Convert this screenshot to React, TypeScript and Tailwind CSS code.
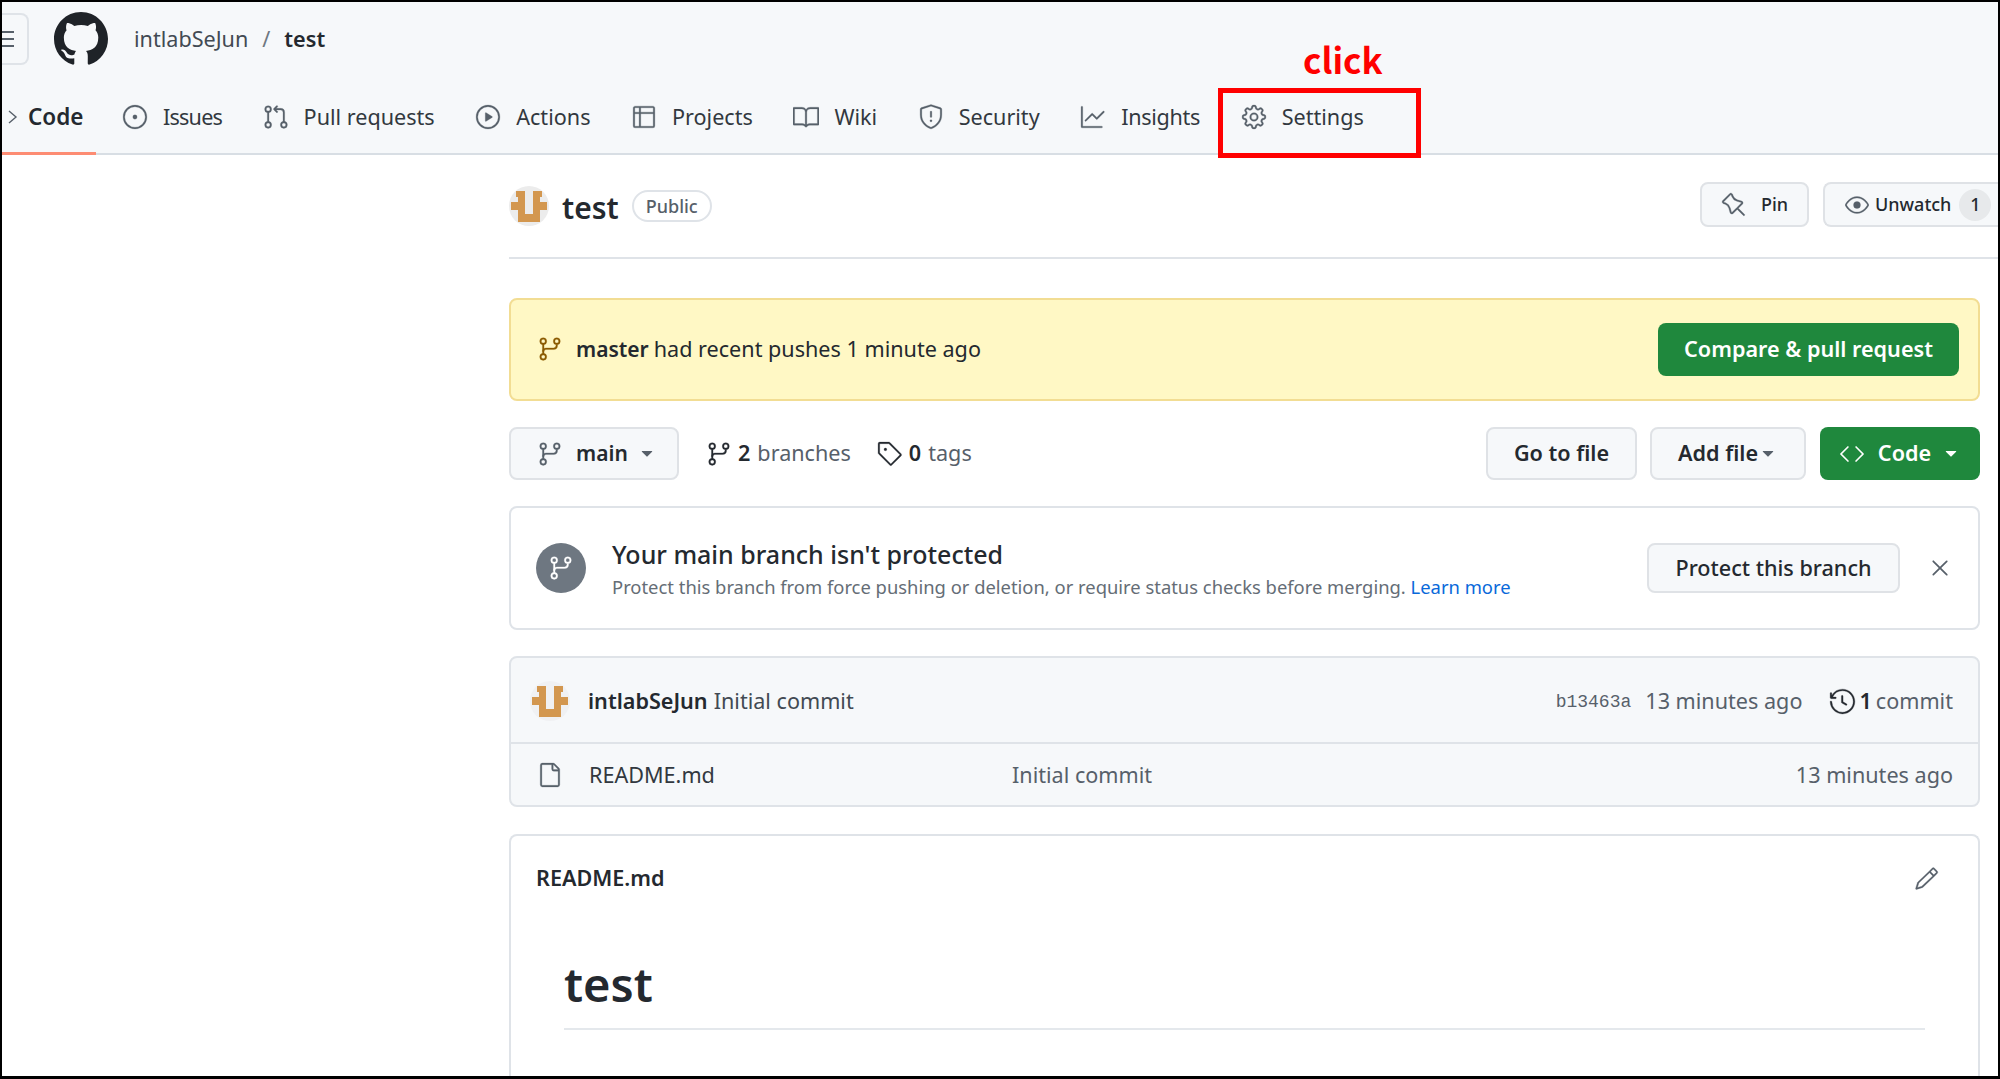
import React from 'react';
import {
    GoBook,
    GoCode,
    GoEye,
    GoFile,
    GoGear,
    GoGitBranch,
    GoGitPullRequest,
    GoGraph,
    GoHistory,
    GoIssueOpened,
    GoPencil,
    GoPin,
    GoPlay,
    GoShield,
    GoTable,
    GoTag,
    GoTriangleDown,
    GoX,
} from 'react-icons/go';

const Avatar: React.FC<{ className: string; bg?: string }> = ({ className, bg = '#ececec' }) => (
    <svg viewBox="0 0 40 40" className={className}>
        <circle cx="20" cy="20" r="20" fill={bg} />
        <path fill="#d3974f" d="M7 5h9v23h8V5h9v6h-2v5h7v8h-7v12H9V24H2v-8h7v-5H7z" />
    </svg>
);

const GithubMark: React.FC = () => (
    <svg viewBox="0 0 16 16" className="ml-[25px] w-[54px] h-[54px]" fill="#1f2328">
        <path d="M8 0C3.58 0 0 3.58 0 8c0 3.54 2.29 6.53 5.47 7.59.4.07.55-.17.55-.38 0-.19-.01-.82-.01-1.49-2.01.37-2.53-.49-2.69-.94-.09-.23-.48-.94-.82-1.13-.28-.15-.68-.52-.01-.53.63-.01 1.08.58 1.23.82.72 1.21 1.87.87 2.33.66.07-.52.28-.87.51-1.07-1.78-.2-3.64-.89-3.64-3.95 0-.87.31-1.59.82-2.15-.08-.2-.36-1.02.08-2.12 0 0 .67-.21 2.2.82.64-.18 1.32-.27 2-.27.68 0 1.36.09 2 .27 1.53-1.04 2.2-.82 2.2-.82.44 1.1.16 1.92.08 2.12.51.56.82 1.27.82 2.15 0 3.07-1.87 3.75-3.65 3.95.29.25.54.73.54 1.48 0 1.07-.01 1.93-.01 2.2 0 .21.15.46.55.38A8.013 8.013 0 0016 8c0-4.42-3.58-8-8-8z" />
    </svg>
);

const tabs = [
    { label: 'Issues', icon: GoIssueOpened, cls: 'tracking-[-0.8px]' },
    { label: 'Pull requests', icon: GoGitPullRequest, cls: '' },
    { label: 'Actions', icon: GoPlay, cls: '' },
    { label: 'Projects', icon: GoTable, cls: '' },
    { label: 'Wiki', icon: GoBook, cls: '' },
    { label: 'Security', icon: GoShield, cls: '' },
    { label: 'Insights', icon: GoGraph, cls: 'tracking-[-0.3px]' },
    { label: 'Settings', icon: GoGear, cls: '' },
];

const btn = 'flex items-center justify-center rounded-[8px] border-2 border-[#dfe2e6] bg-[#f6f8fa] text-[#24292f]';
const green = 'flex items-center justify-center rounded-[8px] bg-[#1f883d] text-white font-semibold';

const App: React.FC = () => {
    return (
        <div className="relative w-[2000px] h-[1079px] overflow-hidden border-x-[2px] border-t-[2px] border-b-[3px] border-black bg-white text-[21.6px] text-[#24292f] font-['Noto_Sans','Liberation_Sans',sans-serif]">
            <header className="h-[153px] bg-[#f6f8fa] border-b-2 border-[#d8dee4]">
                <div className="flex items-center h-[74px]">
                    <div className="flex items-center justify-start w-[27px] h-[52px] rounded-r-[8px] border-2 border-l-0 border-[#dfe3e8]">
                        <div className="flex flex-col gap-[5px] w-[12px]">
                            <div className="h-[2px] bg-[#57606a]" />
                            <div className="h-[2px] bg-[#57606a]" />
                            <div className="h-[2px] bg-[#57606a]" />
                        </div>
                    </div>
                    <GithubMark />
                    <div className="flex items-center ml-[26px] text-[#424a53]">
                        <span>intlabSeJun</span>
                        <span className="mx-[14px] text-[#6e7781]">/</span>
                        <span className="font-semibold text-[#24292f]">test</span>
                    </div>
                </div>
                <nav className="flex items-center h-[77px]">
                    <div className="relative flex items-center w-[94px] self-stretch pt-[5px]">
                        <svg viewBox="0 0 16 16" className="ml-[1px] w-[16px] h-[20px]" fill="none" stroke="#57606a" strokeWidth="1.4">
                            <path d="M6 2l7 6-7 6" />
                        </svg>
                        <span className="ml-[9px] text-[22.5px] font-semibold text-[#24292f]">Code</span>
                        <div className="absolute left-0 right-0 -bottom-[2px] h-[3px] bg-[#fd8c73]" />
                    </div>
                    <div className="flex items-center gap-[40.5px] ml-[26px] pt-[5px]">
                        {tabs.map((t) => (
                            <div key={t.label} className="flex items-center gap-[15px] text-[#32383f]">
                                <t.icon className="text-[26px] text-[#57606a] stroke-[0.25]" />
                                <span className={t.cls}>{t.label}</span>
                            </div>
                        ))}
                    </div>
                </nav>
            </header>

            <main className="ml-[507px] w-[1471px]">
                <div className="w-[1489px] h-[104px] flex items-center justify-between border-b-2 border-[#dfe3e8] pb-[3px]">
                    <div className="flex items-center pt-[3px]">
                        <Avatar className="w-[40px] h-[40px]" />
                        <span className="ml-[13px] text-[30px] font-semibold pt-[2px]">test</span>
                        <span className="ml-[13px] flex items-center h-[32px] px-[12px] rounded-full border-2 border-[#dfe3e8] text-[18px] text-[#57606a] font-medium">Public</span>
                    </div>
                    <div className="flex items-center gap-[14px]">
                        <div className={`${btn} w-[109px] h-[45px] text-[18px] font-medium gap-[14px]`}>
                            <GoPin className="text-[26px] text-[#57606a] stroke-[0.25]" />
                            <span>Pin</span>
                        </div>
                        <div className={`${btn} w-[175px] h-[45px] text-[18px] font-medium justify-start pl-[20px] rounded-r-none border-r-0`}>
                            <GoEye className="text-[24px] text-[#57606a] stroke-[0.25]" />
                            <span className="ml-[6px]">Unwatch</span>
                            <span className="ml-[8px] flex items-center justify-center w-[32px] h-[32px] rounded-full bg-[#e7e9eb]">1</span>
                        </div>
                    </div>
                </div>

                <div className="flex items-center justify-between mt-[39px] h-[103px] rounded-[8px] border-2 border-[#f2dd93] bg-[#fff8c5] pl-[26px] pr-[19px]">
                    <div className="flex items-center">
                        <GoGitBranch className="text-[26px] text-[#8a5a00] stroke-[0.25]" />
                        <span className="ml-[13px] text-[21px] font-semibold">master</span>
                        <span className="ml-[5px]">had recent pushes 1 minute ago</span>
                    </div>
                    <div className={`${green} w-[301px] h-[53px]`}>Compare &amp; pull request</div>
                </div>

                <div className="flex items-center justify-between mt-[26px] h-[53px]">
                    <div className="flex items-center">
                        <div className={`${btn} w-[170px] h-[53px] text-[21px] font-semibold justify-start pl-[26px]`}>
                            <GoGitBranch className="text-[26px] text-[#57606a] stroke-[0.25]" />
                            <span className="ml-[13px]">main</span>
                            <GoTriangleDown className="ml-[9px] text-[20px] text-[#57606a]" />
                        </div>
                        <GoGitBranch className="ml-[27px] text-[26px] text-[#24292f] stroke-[0.25]" />
                        <span className="ml-[6px] font-semibold">2</span>
                        <span className="ml-[7px] text-[#57606a]">branches</span>
                        <GoTag className="ml-[26px] text-[26px] text-[#24292f] stroke-[0.25]" />
                        <span className="ml-[6px] font-semibold">0</span>
                        <span className="ml-[7px] text-[#57606a]">tags</span>
                    </div>
                    <div className="flex items-center">
                        <div className={`${btn} w-[151px] h-[53px] font-semibold`}>Go to file</div>
                        <div className={`${btn} ml-[13px] w-[156px] h-[53px] font-semibold`}>
                            Add file
                            <GoTriangleDown className="text-[20px] text-[#57606a]" />
                        </div>
                        <div className={`${green} ml-[14px] w-[160px] h-[53px]`}>
                            <GoCode className="text-[26px]" />
                            <span className="ml-[13px]">Code</span>
                            <GoTriangleDown className="ml-[10px] text-[20px]" />
                        </div>
                    </div>
                </div>

                <div className="flex items-center mt-[26px] h-[124px] rounded-[8px] border-2 border-[#dfe3e8] pl-[25px] pr-[24px]">
                    <div className="flex items-center justify-center w-[50px] h-[50px] rounded-full bg-[#6e7781]">
                        <GoGitBranch className="text-[26px] text-white stroke-[0.25]" />
                    </div>
                    <div className="ml-[26px] flex-1 pt-[4px]">
                        <div className="text-[25px] font-medium leading-[34px]">Your main branch isn't protected</div>
                        <div className="text-[18.4px] text-[#656d76] leading-[32px]">
                            Protect this branch from force pushing or deletion, or require status checks before merging.{' '}
                            <span className="text-[#0969da]">Learn more</span>
                        </div>
                    </div>
                    <div className={`${btn} w-[253px] h-[50px] font-medium`}>Protect this branch</div>
                    <GoX className="ml-[26px] text-[28px] text-[#57606a]" />
                </div>

                <div className="mt-[26px] h-[151px] rounded-[8px] border-2 border-[#dfe3e8] bg-[#f6f8fa]">
                    <div className="flex items-center h-[86px] border-b-2 border-[#dfe3e8] pl-[19px] pr-[25px] pt-[2px]">
                        <Avatar className="w-[40px] h-[40px]" bg="#f0f1f3" />
                        <span className="ml-[18px] font-semibold">intlabSeJun</span>
                        <span className="ml-[6px] text-[#424a53]">Initial commit</span>
                        <span className="ml-auto pt-[3px] text-[18px] text-[#57606a] font-['Liberation_Mono',monospace]">b13463a</span>
                        <span className="ml-[14px] text-[#57606a]">13 minutes ago</span>
                        <GoHistory className="ml-[27px] text-[27px] text-[#24292f] stroke-[0.25]" />
                        <span className="ml-[3px] font-semibold">1</span>
                        <span className="ml-[4px] text-[#57606a]">commit</span>
                    </div>
                    <div className="flex items-center h-[61px] pl-[26px] pr-[25px] pt-[1px]">
                        <GoFile className="text-[26px] text-[#57606a] stroke-[0.25]" />
                        <span className="ml-[26px] w-[423px] text-[#32383f]">README.md</span>
                        <span className="text-[#57606a]">Initial commit</span>
                        <span className="ml-auto text-[#57606a]">13 minutes ago</span>
                    </div>
                </div>

                <div className="mt-[27px] h-[260px] rounded-t-[8px] border-2 border-b-0 border-[#dfe3e8] bg-white">
                    <div className="flex items-center justify-between h-[84px] pl-[25px] pr-[39px]">
                        <span className="font-semibold">README.md</span>
                        <GoPencil className="text-[25px] text-[#57606a] stroke-[0.25]" />
                    </div>
                    <div className="mx-[53px]">
                        <h1 className="h-[110px] pt-[28px] text-[47px] font-semibold leading-[72px] border-b-2 border-[#e4e8ec]">test</h1>
                    </div>
                </div>
            </main>

            <div className="absolute left-[1301px] top-[34px] text-[35px] leading-[46px] font-bold text-[#ff0000] font-['Noto_Sans_CJK_KR',sans-serif]">click</div>
            <div className="absolute left-[1216px] top-[86px] w-[203px] h-[70px] border-[5px] border-[#ff0000]" />
        </div>
    );
};

export default App;
